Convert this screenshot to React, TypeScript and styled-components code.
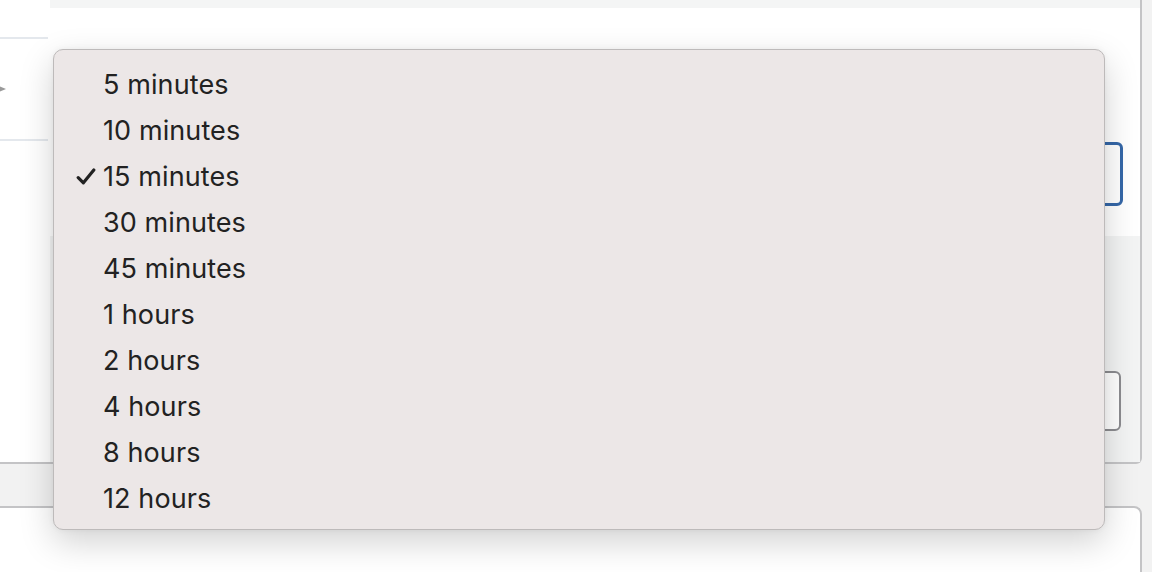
import styled, { createGlobalStyle } from "styled-components";

const options = [
  "5 minutes",
  "10 minutes",
  "15 minutes",
  "30 minutes",
  "45 minutes",
  "1 hours",
  "2 hours",
  "4 hours",
  "8 hours",
  "12 hours",
];

const selected = "15 minutes";

export default function App() {
  return (
    <>
      <GlobalStyle />
      <StyledPage>
        <StyledCard>
          <StyledSidebar>
            <StyledSideRow>
              <StyledArrow />
            </StyledSideRow>
          </StyledSidebar>
          <StyledMain>
            <StyledTopBar />
            <StyledFieldArea>
              <StyledSelectBox $focused />
            </StyledFieldArea>
            <StyledGraySection>
              <StyledSelectBox />
            </StyledGraySection>
          </StyledMain>
        </StyledCard>
        <StyledSecondCard />

        <StyledMenu>
          {options.map((option) => (
            <StyledMenuItem key={option}>
              <StyledCheck>
                {option === selected && (
                  <svg width="20" height="17" viewBox="0 0 20 17">
                    <path
                      d="M2.2 9.6 L7.4 14.8 L17.8 2"
                      fill="none"
                      stroke="#222"
                      strokeWidth="3.2"
                      strokeLinecap="round"
                      strokeLinejoin="round"
                    />
                  </svg>
                )}
              </StyledCheck>
              {option}
            </StyledMenuItem>
          ))}
        </StyledMenu>
      </StyledPage>
    </>
  );
}

const GlobalStyle = createGlobalStyle`
  body {
    margin: 0;
    background-color: #f2f2f2;
    overflow: hidden;
    font-family: "Inter", "Liberation Sans", sans-serif;
  }
`;

const StyledPage = styled.div`
  position: relative;
  width: 1152px;
  height: 572px;
  display: flex;
  flex-direction: column;
`;

const StyledCard = styled.div`
  width: 1142px;
  height: 464px;
  box-sizing: border-box;
  display: flex;
  background-color: #ffffff;
  border-right: 2px solid #c4c4c6;
  border-bottom: 2px solid #c4c4c6;
  border-radius: 0 0 6px 0;
`;

const StyledSidebar = styled.div`
  width: 48px;
  padding-top: 37px;
  border-right: 2px solid #ffffff;
`;

const StyledSideRow = styled.div`
  height: 100px;
  border-top: 2px solid #e4e8ed;
  border-bottom: 2px solid #e4e8ed;
  display: flex;
  align-items: center;
`;

const StyledArrow = styled.div`
  width: 0;
  height: 0;
  border-top: 3px solid transparent;
  border-bottom: 3px solid transparent;
  border-left: 7px solid #9a9a9a;
  margin-left: -1px;
`;

const StyledMain = styled.div`
  flex: 1;
  display: flex;
  flex-direction: column;
`;

const StyledTopBar = styled.div`
  height: 8px;
  background-color: #f4f5f5;
`;

const StyledFieldArea = styled.div`
  height: 228px;
  display: flex;
  flex-direction: column;
  align-items: flex-end;
  padding-right: 17px;
  box-sizing: border-box;
  padding-top: 134px;
`;

const StyledSelectBox = styled.div<{ $focused?: boolean }>`
  width: 300px;
  height: ${(p) => (p.$focused ? "64px" : "60px")};
  box-sizing: border-box;
  border: ${(p) => (p.$focused ? "3px solid #3567a8" : "2px solid #8c8c90")};
  border-radius: 6px;
  background-color: #ffffff;
`;

const StyledGraySection = styled.div`
  flex: 1;
  background-color: #f3f4f4;
  display: flex;
  flex-direction: column;
  align-items: flex-end;
  padding-right: 19px;
  padding-top: 135px;
`;

const StyledSecondCard = styled.div`
  margin-top: 42px;
  width: 1142px;
  flex: 1;
  box-sizing: border-box;
  background-color: #ffffff;
  border-top: 2px solid #c4c4c6;
  border-right: 2px solid #c4c4c6;
  border-radius: 0 8px 0 0;
`;

const StyledMenu = styled.div`
  position: absolute;
  left: 53px;
  top: 49px;
  width: 1052px;
  height: 481px;
  box-sizing: border-box;
  padding: 11px 0 8px;
  background-color: #ece7e7;
  border: 1px solid #bdbaba;
  border-radius: 10px;
  box-shadow: 0 12px 34px rgba(0, 0, 0, 0.18), 0 0 6px rgba(0, 0, 0, 0.05);
`;

const StyledMenuItem = styled.div`
  height: 46px;
  display: flex;
  align-items: center;
  font-size: 27px;
  color: #222222;
  letter-spacing: 0.1px;
`;

const StyledCheck = styled.span`
  width: 49px;
  display: flex;
  justify-content: flex-end;
  padding-right: 7px;
  box-sizing: border-box;
`;
